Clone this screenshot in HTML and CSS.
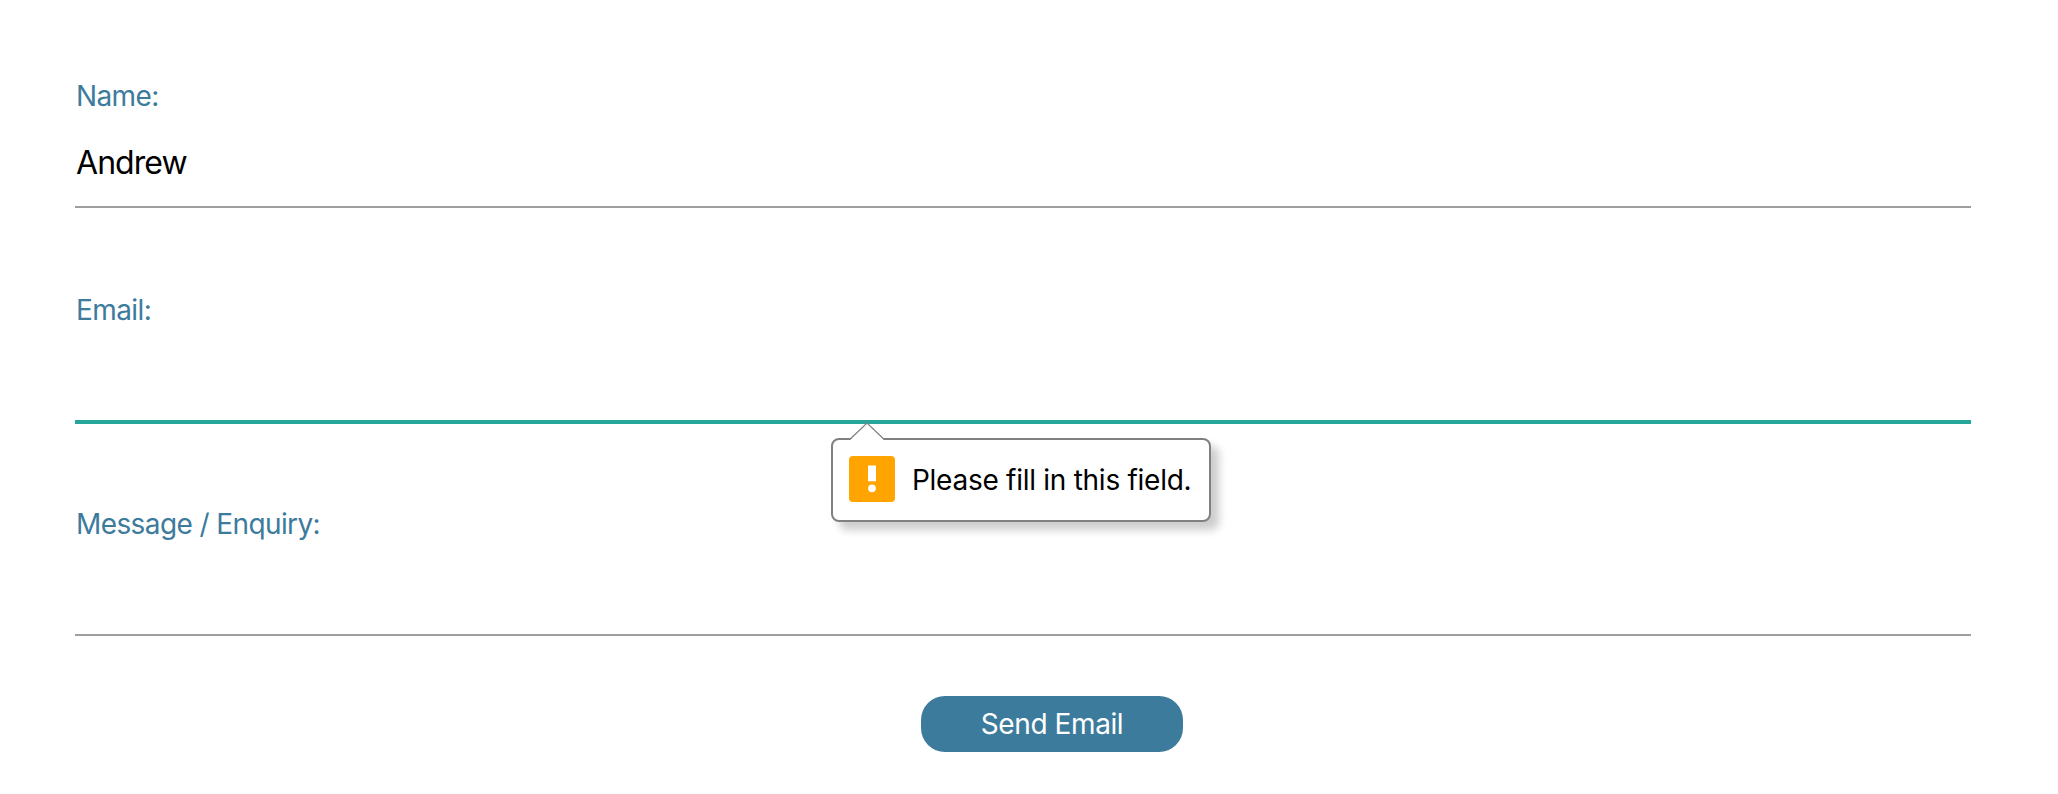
FILE: index.html
```html
<!DOCTYPE html>
<html lang="en">
<head>
<meta charset="utf-8">
<title>Contact</title>
<link rel="stylesheet" href="styles.css">
</head>
<body>
<form class="contact-form" novalidate>
  <div class="field">
    <label class="field-label" for="name">Name:</label>
    <input class="field-input" id="name" type="text" value="Andrew">
  </div>
  <div class="field">
    <label class="field-label" for="email">Email:</label>
    <input class="field-input is-active" id="email" type="email">
    <div class="tooltip" role="alert">
      <svg class="tooltip-arrow" width="36" height="19" viewBox="0 0 36 19">
        <path d="M1 19 L1.8 17.3 L18 1 L34.2 17.3 L35 19 Z" fill="#fff"/>
        <path d="M1 17.3 L18 1 L35 17.3" fill="none" stroke="#808080" stroke-width="1.2"/>
      </svg>
      <svg class="tooltip-icon" width="46" height="46" viewBox="0 0 46 46">
        <rect width="46" height="46" rx="4" fill="#ffa400"/>
        <rect x="19" y="9.5" width="8" height="15.8" fill="#fff"/>
        <circle cx="23" cy="32.4" r="3.8" fill="#fff"/>
      </svg>
      <span class="tooltip-text">Please fill in this field.</span>
    </div>
  </div>
  <div class="field">
    <label class="field-label" for="message">Message / Enquiry:</label>
    <input class="field-input" id="message" type="text">
  </div>
  <button class="send-button" type="button">Send Email</button>
</form>
</body>
</html>
```
FILE: styles.css
```css
* { box-sizing: border-box; }

body {
  margin: 0;
  background: #fff;
  font-family: Inter, "Liberation Sans", sans-serif;
}

.contact-form {
  display: flex;
  flex-direction: column;
  padding: 79px 87px 0 75px;
}

.field {
  position: relative;
  display: flex;
  flex-direction: column;
  gap: 6px;
  height: 214px;
}

.field-label {
  height: 34px;
  padding-left: 1px;
  font-size: 28px;
  line-height: 34px;
  letter-spacing: -0.6px;
  color: #3d7b9c;
}

.field-input {
  width: 100%;
  height: 89px;
  padding: 0 1px;
  border: 0;
  border-bottom: 2px solid #9e9e9e;
  border-radius: 0;
  outline: none;
  background: transparent;
  color: #000;
  font-family: inherit;
  font-size: 32px;
  letter-spacing: -0.95px;
}

.field-input.is-active {
  border-bottom-color: #26a69a;
  box-shadow: 0 2px 0 #26a69a;
}

.tooltip {
  position: absolute;
  z-index: 1;
  top: 145px;
  left: 756px;
  display: flex;
  align-items: center;
  gap: 17px;
  width: 380px;
  height: 84px;
  padding: 0 16px;
  border: 2px solid #808080;
  border-radius: 8px;
  background: #fff;
  box-shadow: 8px 8px 8px rgba(0, 0, 0, 0.2);
}

.tooltip-arrow {
  position: absolute;
  top: -18px;
  left: 16px;
}

.tooltip-icon {
  flex: none;
  margin-bottom: 2px;
}

.tooltip-text {
  font-size: 28px;
  line-height: 34px;
  letter-spacing: -0.27px;
  white-space: nowrap;
  color: #000;
}

.send-button {
  align-self: center;
  width: 262px;
  height: 56px;
  margin: -25px 0 0 58px;
  padding: 0;
  border: 0;
  border-radius: 24px;
  background: #3d7b9c;
  color: #fff;
  font-family: inherit;
  font-size: 28px;
  letter-spacing: -0.4px;
}
```
